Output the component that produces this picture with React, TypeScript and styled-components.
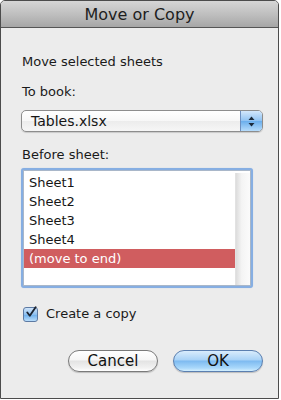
import React, { useState } from "react";
import styled, { createGlobalStyle } from "styled-components";

const GlobalStyle = createGlobalStyle`
  html, body {
    margin: 0;
    padding: 0;
    background: #ffffff;
  }
  body {
    font-family: "DejaVu Sans", "Liberation Sans", sans-serif;
    color: #1a1a1a;
  }
`;

const sheets = ["Sheet1", "Sheet2", "Sheet3", "Sheet4", "(move to end)"];

export default function App() {
    const [selected, setSelected] = useState(4);
    const [copy, setCopy] = useState(true);

    return (
        <>
            <GlobalStyle />
            <Window>
                <TitleBar>Move or Copy</TitleBar>

                <Content>
                    <Label $top={26}>Move selected sheets</Label>
                    <Label $top={14}>To book:</Label>

                    <Select>
                        <SelectText>Tables.xlsx</SelectText>
                        <Stepper>
                            <svg width="7" height="11" viewBox="0 0 7 11">
                                <path d="M3.5 0.5 L6.5 4 L0.5 4 Z" fill="#1b2a3a" />
                                <path d="M3.5 10.5 L6.5 7 L0.5 7 Z" fill="#1b2a3a" />
                            </svg>
                        </Stepper>
                    </Select>

                    <Label $top={15}>Before sheet:</Label>

                    <ListBox>
                        <ListInner>
                            <Items>
                                {sheets.map((s, i) => (
                                    <Item key={s} $active={i === selected} onClick={() => setSelected(i)}>
                                        {s}
                                    </Item>
                                ))}
                            </Items>
                            <ScrollTrack />
                        </ListInner>
                    </ListBox>

                    <CheckRow onClick={() => setCopy(!copy)}>
                        <CheckBox>
                            {copy && (
                                <svg width="13" height="13" viewBox="0 0 13 13">
                                    <path
                                        d="M2.5 6.5 L5.2 10 L11.5 0.8"
                                        stroke="#1c2430"
                                        strokeWidth="2"
                                        fill="none"
                                        strokeLinecap="round"
                                        strokeLinejoin="round"
                                    />
                                </svg>
                            )}
                        </CheckBox>
                        Create a copy
                    </CheckRow>

                    <ButtonRow>
                        <PillButton>Cancel</PillButton>
                        <PillButton $primary>OK</PillButton>
                    </ButtonRow>
                </Content>
            </Window>
        </>
    );
}

const Window = styled.div`
  width: 277px;
  height: 397px;
  border: 1px solid #4c4c4c;
  border-radius: 5px 5px 0 0;
  background-color: #ececec;
  overflow: hidden;
  display: flex;
  flex-direction: column;
`;

const TitleBar = styled.div`
  height: 27px;
  border-bottom: 1px solid #555555;
  background: linear-gradient(#d6d6d6, #bdbdbd 55%, #a6a6a6);
  display: flex;
  align-items: center;
  justify-content: center;
  font-size: 16px;
  color: #1e1e1e;
  padding-top: 1px;
  box-sizing: border-box;
`;

const Content = styled.div`
  padding: 0 15px 0 20px;
  display: flex;
  flex-direction: column;
`;

const Label = styled.div<{ $top: number }>`
  margin-top: ${(p) => p.$top}px;
  padding-left: 1px;
  font-size: 13px;
  line-height: 16px;
`;

const Select = styled.div`
  margin-top: 10px;
  height: 22px;
  box-sizing: border-box;
  border: 1px solid #8d8d8d;
  border-radius: 5px;
  background: linear-gradient(#ffffff, #f7f7f7 50%, #ececec 51%, #f6f6f6);
  box-shadow: 0 1px 1px rgba(0, 0, 0, 0.15);
  display: flex;
  align-items: stretch;
  overflow: hidden;
`;

const SelectText = styled.div`
  flex: 1;
  padding-left: 9px;
  font-size: 14px;
  line-height: 20px;
  color: #151515;
`;

const Stepper = styled.div`
  width: 21px;
  border-left: 1px solid #6d8fbf;
  background: linear-gradient(#d3e7fb, #8fc2f2 50%, #6aaeec 51%, #b6dcfb);
  display: flex;
  align-items: center;
  justify-content: center;
`;

const ListBox = styled.div`
  margin-top: 5px;
  width: 232px;
  height: 120px;
  box-sizing: border-box;
  border: 2px solid #86aee2;
  border-radius: 3px;
  box-shadow: 0 0 1px #a9c6ec;
  background: #ffffff;
`;

const ListInner = styled.div`
  height: 100%;
  box-sizing: border-box;
  border: 1px solid #a9b7c9;
  padding-top: 2px;
  display: flex;
`;

const Items = styled.div`
  flex: 1;
`;

const Item = styled.div<{ $active?: boolean }>`
  height: 19px;
  line-height: 19px;
  padding-left: 5px;
  font-size: 13px;
  background: ${(p) => (p.$active ? "#d05d5f" : "transparent")};
  color: ${(p) => (p.$active ? "#ffffff" : "#161616")};
  cursor: default;
`;

const ScrollTrack = styled.div`
  width: 14px;
  background: linear-gradient(90deg, #dcdcdc, #f4f4f4 40%, #fbfbfb);
  border-left: 1px solid #e2e2e2;
`;

const CheckRow = styled.div`
  margin-top: 18px;
  padding-left: 2px;
  display: flex;
  align-items: center;
  gap: 8px;
  font-size: 13px;
  line-height: 16px;
  cursor: default;
`;

const CheckBox = styled.div`
  width: 15px;
  height: 15px;
  box-sizing: border-box;
  border: 1px solid #5d7aa3;
  border-radius: 3px;
  background: linear-gradient(#cfe4fa, #8ec0f0 50%, #6aaeec 51%, #b9ddfb);
  display: flex;
  align-items: center;
  justify-content: center;
  overflow: visible;

  svg {
    margin-top: -3px;
    margin-left: 1px;
  }
`;

const ButtonRow = styled.div`
  margin-top: 28px;
  display: flex;
  justify-content: flex-end;
  gap: 15px;
`;

const PillButton = styled.button<{ $primary?: boolean }>`
  width: 90px;
  height: 22px;
  box-sizing: border-box;
  border: 1px solid ${(p) => (p.$primary ? "#5b7fb0" : "#7a7a7a")};
  border-radius: 11px;
  font-family: "DejaVu Sans", "Liberation Sans", sans-serif;
  font-size: 15px;
  color: #111111;
  padding: 0;
  box-shadow: 0 1px 1px rgba(0, 0, 0, 0.2);
  background: ${(p) =>
    p.$primary
      ? "linear-gradient(#d9ecfc, #a8d2f7 45%, #7dbaf0 50%, #a9d8fb 85%, #d4effe)"
      : "linear-gradient(#ffffff, #f6f6f6 45%, #e3e3e3 50%, #f2f2f2 85%, #ffffff)"};
  cursor: pointer;
`;
